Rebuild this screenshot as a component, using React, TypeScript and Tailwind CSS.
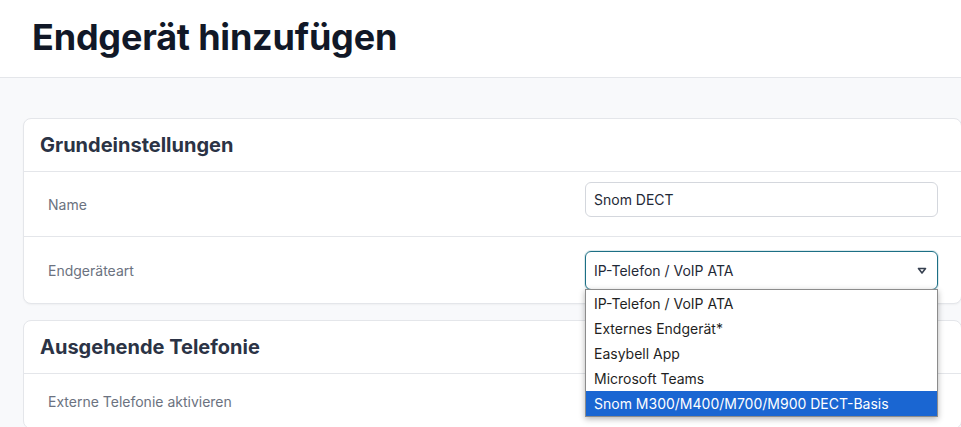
const font = { fontFamily: 'Inter, "Noto Sans", sans-serif' };

const options = [
  "IP-Telefon / VoIP ATA",
  "Externes Endgerät*",
  "Easybell App",
  "Microsoft Teams",
  "Snom M300/M400/M700/M900 DECT-Basis",
];

export default function App() {
  return (
    <div className="h-[427px] w-[961px] overflow-hidden bg-[#f8f9fb]" style={font}>
      <header className="h-[78px] border-b border-[#e4e6ea] bg-white pl-[32px] pt-[13px]">
        <h1 className="text-[36px] font-bold leading-[48px] tracking-[-0.2px] text-[#111827]">
          Endgerät hinzufügen
        </h1>
      </header>

      <main className="flex flex-col gap-[16px] pl-[23px] pt-[40px]">
        <section className="w-[939px] rounded-lg border border-[#e4e6ea] bg-white shadow-[0_1px_2px_rgba(0,0,0,0.04)]">
          <div className="flex h-[53px] items-center border-b border-[#e4e6ea] px-4">
            <h2 className="text-[20px] font-bold text-[#2b3345]">Grundeinstellungen</h2>
          </div>

          <div className="flex h-[65px] border-b border-[#e4e6ea]">
            <div className="flex w-[561px] items-center pl-6 text-[14px] text-[#6b7280]">Name</div>
            <div className="pt-[10px]">
              <div className="flex h-[35px] w-[353px] items-center rounded-md border border-[#d4d7dd] px-[8px] text-[14px] text-[#1f2937]">
                Snom DECT
              </div>
            </div>
          </div>

          <div className="flex h-[66px]">
            <div className="flex w-[561px] items-center pl-6 text-[14px] text-[#6b7280]">Endgeräteart</div>
            <div className="relative pt-[14px]">
              <div className="flex h-[39px] w-[353px] items-center justify-between rounded-md border border-[#1d6f85] pl-[8px] pr-[10px] text-[14px] text-[#1f2937] shadow-[0_0_0_1px_rgba(29,111,133,0.15)]">
                <span>IP-Telefon / VoIP ATA</span>
                <svg width="10" height="8" viewBox="0 0 10 8" fill="none">
                  <path d="M1.5 1.5 H8.5 L5 6 Z" stroke="#374151" strokeWidth="1.6" strokeLinejoin="round" />
                </svg>
              </div>

              <ul className="absolute left-0 top-[52px] z-10 w-[353px] border border-[#8c8c8c] bg-white pt-px text-[14px] text-[#1f1f1f] shadow-[0_2px_6px_rgba(0,0,0,0.3)]">
                {options.map((o, i) => (
                  <li
                    key={o}
                    className={
                      i === options.length - 1
                        ? "flex h-[25px] items-center bg-[#1a66d2] pl-[8px] text-white"
                        : "flex h-[25px] items-center pl-[8px]"
                    }
                  >
                    {o}
                  </li>
                ))}
              </ul>
            </div>
          </div>
        </section>

        <section className="w-[939px] rounded-lg border border-[#e4e6ea] bg-white">
          <div className="flex h-[53px] items-center border-b border-[#e4e6ea] px-4">
            <h2 className="text-[20px] font-bold text-[#2b3345]">Ausgehende Telefonie</h2>
          </div>
          <div className="flex h-[54px] items-center pl-6 text-[14px] text-[#6b7280]">
            Externe Telefonie aktivieren
          </div>
        </section>
      </main>
    </div>
  );
}
